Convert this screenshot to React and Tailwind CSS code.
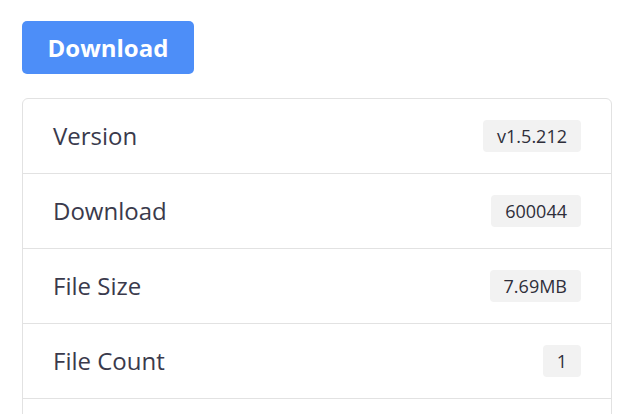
const rows = [
  { label: "Version", value: "v1.5.212" },
  { label: "Download", value: "600044" },
  { label: "File Size", value: "7.69MB" },
  { label: "File Count", value: "1" },
  { label: "", value: "" },
];

export default function App() {
  return (
    <div className="h-[414px] overflow-hidden bg-white pl-[22px] pt-[21px] font-['Open_Sans','Noto_Sans',sans-serif]">
      {/* DOWNLOAD BUTTON */}
      <button className="flex h-[53px] w-[172px] items-center justify-center rounded-[5px] bg-[#4d8ef8] text-[24px] font-bold text-white">
        Download
      </button>

      {/* INFO CARD */}
      <div className="mt-[24px] w-[590px] rounded-t-[6px] border border-[#e2e2e2]">
        {rows.map((row, i) => (
          <div
            key={i}
            className={`flex h-[75px] items-center justify-between pl-[30px] pr-[30px] ${
              i < rows.length - 1 ? "border-b border-[#e2e2e2]" : ""
            }`}
          >
            <span className="text-[24px] text-[#3a3a4c]">{row.label}</span>
            {row.value && (
              <span className="flex h-[32px] items-center rounded-[4px] bg-[#f2f2f2] px-[14px] text-[18px] font-medium text-[#2e2e3a]">
                {row.value}
              </span>
            )}
          </div>
        ))}
      </div>
    </div>
  );
}
